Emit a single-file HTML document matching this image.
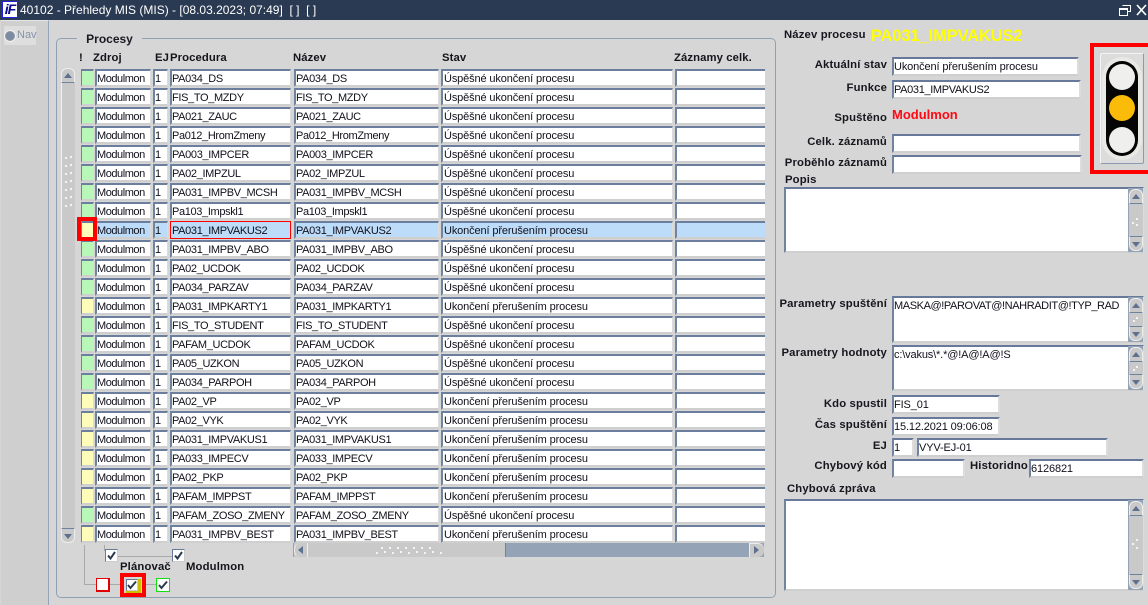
<!DOCTYPE html>
<html><head><meta charset="utf-8"><style>
*{box-sizing:border-box}
html,body{margin:0;padding:0;width:1148px;height:605px;overflow:hidden;background:#d6d6d6;font-family:"Liberation Sans",sans-serif;font-size:12px;color:#000}
div,span,b,i{position:absolute;font-style:normal}
#tb{left:0;top:0;width:1148px;height:20px;background:#2a3a52;color:#fff;font-size:12px;line-height:20px;white-space:pre}
#lg{left:2px;top:1px;width:16px;height:17px;background:#fff;border:1px solid #2222dd;color:#0a0a90;font:italic bold 14px/15px "Liberation Sans",sans-serif;text-align:center;letter-spacing:-1px}
#np{left:1px;top:20px;width:48px;height:585px;background:#cfcfcf;border-right:1px solid #94a3b6;border-top:1px solid #e6e6e6}
#nv{left:4px;top:26px;width:32px;height:19px;background:#dedede;color:#8593a8;font-size:11px;line-height:19px;padding-left:13px}
#rd{left:5px;top:31px;width:10px;height:10px;border-radius:50%;background:#7d8ba0;border:1px solid #8a96a8;box-shadow:0 0 0 1px #f2f2f2}
#gr{left:56px;top:38px;width:720px;height:560px;border:1px solid #8fa0b5;border-radius:5px}
#gl{left:77px;top:32px;width:65px;height:14px;background:#d6d6d6;font-weight:bold;font-size:12px;text-align:center;line-height:14px;color:#1a1a22}
.h{top:52px;font-weight:bold;font-size:11.3px;line-height:13px;color:#14141c;white-space:pre;letter-spacing:.1px}
.r{left:0;width:770px;height:18px}
.r i,.r b{top:0;height:18px;background:#fff;border:2px solid;border-color:#6b7e9e #dcdcdc #cfcfcf #71849f;border-width:2px 1px 2px 2px;font-weight:normal;font-size:11px;letter-spacing:-.35px;line-height:15px;padding:1px 0 0;white-space:pre;overflow:hidden;color:#10101a}
.r i{left:81px;width:13px;height:18px;background:#b9f7b9;border-left-width:1px}
.r i.y{background:#fdfdb9}
.r b:nth-child(2){left:95px;width:56px;letter-spacing:-.45px}
.r b:nth-child(3){left:153px;width:15px;letter-spacing:0}
.r b:nth-child(4){left:170px;width:121px}
.r b:nth-child(5){left:294px;width:145px}
.r b:nth-child(6){left:441px;width:232px;letter-spacing:-.13px;padding-left:1px}
.r b:nth-child(7){left:675px;width:90px;border-right:0}
.s b{background:#bddcfa}
.s b:nth-child(4){border:1px solid #ff0000;padding:1px 0 0 1px;line-height:16px;background:#bddcfa}
.f{background:#fff;border:2px solid;border-color:#66799a #dcdcdc #cfcfcf #71849f;border-width:2px;line-height:15px;padding:1px 0 0;font-size:11px;letter-spacing:-.13px;white-space:pre;overflow:hidden;height:19px;color:#10101a}
.l{font-weight:bold;font-size:11.3px;line-height:13px;right:261px;margin-top:1px;white-space:pre;color:#16161e;letter-spacing:.15px}
.l.a{right:auto}
.sb{width:15px;background:#94a3b6}
.sb>.bt,.sb>.bd,.sb>.tk{left:1px;width:14px}
.bt{background:#c9c9c9;border:1px solid #eee;border-radius:6px 6px 0 0;height:15px;top:1px;border-bottom-color:#6f83a0}
.bd{background:#c9c9c9;border:1px solid #eee;border-radius:0 0 6px 6px;height:15px;bottom:1px;border-top-color:#6f83a0}
.tk{background:#c9c9c9;top:16px;bottom:16px}
.up{left:4px;top:6px;width:0;height:0;border-left:4px solid transparent;border-right:4px solid transparent;border-bottom:5px solid #5d7090}
.dn{left:4px;bottom:5px;width:0;height:0;border-left:4px solid transparent;border-right:4px solid transparent;border-top:5px solid #5d7090}
.g{width:2px;height:2px;background:#f4f4f4}
.c{width:13px;height:13px;background:#fff;border:1px solid #ccc;border-top-color:#66799a;border-left-color:#66799a}
.ln{background:#a9a9a9}
.c svg{position:absolute;left:0;top:0}
</style></head><body>
<div id="tb"><span style="left:20px;top:0">40102 - Přehledy MIS (MIS) - [08.03.2023; 07:49]  [ ]  [ ]</span></div>
<div id="lg">iF</div>
<svg style="position:absolute;left:1118px;top:3px" width="30" height="14" fill="none" stroke="#fff"><path d="M4.5 2.5h8v6h-3M1.5 5.5h8v7h-8zM1.5 6.5h8" /><path d="M19 2l9 10M28 2l-9 10" stroke-width="1.6"/></svg>
<div id="np"></div><div id="nv">Nav</div><div id="rd"></div>
<div id="gr"></div><div id="gl">Procesy</div>

<div class="h" style="left:79px">!</div><div class="h" style="left:93px">Zdroj</div><div class="h" style="left:155px">EJ</div><div class="h" style="left:170px">Procedura</div><div class="h" style="left:293px">Název</div><div class="h" style="left:442px">Stav</div><div class="h" style="left:674px">Záznamy celk.</div>

<div class="sb" style="left:60px;top:67px;width:15px;height:477px;background:transparent">
<div class="bt"></div><div class="up"></div>
<div class="tk" style="border-left:1px solid #f2f2f2"></div>
<div class="bd"></div><div class="dn"></div>
<div class="g" style="left:5px;top:90px"></div><div class="g" style="left:10px;top:89px"></div><div class="g" style="left:5px;top:98px"></div><div class="g" style="left:10px;top:97px"></div><div class="g" style="left:5px;top:106px"></div><div class="g" style="left:10px;top:105px"></div><div class="g" style="left:5px;top:114px"></div><div class="g" style="left:10px;top:113px"></div><div class="g" style="left:5px;top:122px"></div><div class="g" style="left:10px;top:121px"></div><div class="g" style="left:5px;top:130px"></div><div class="g" style="left:10px;top:129px"></div><div class="g" style="left:5px;top:138px"></div><div class="g" style="left:10px;top:137px"></div>
</div>

<div class="r" style="top:69px"><i></i><b>Modulmon</b><b>1</b><b>PA034_DS</b><b>PA034_DS</b><b>Úspěšné ukončení procesu</b><b></b></div>
<div class="r" style="top:88px"><i></i><b>Modulmon</b><b>1</b><b>FIS_TO_MZDY</b><b>FIS_TO_MZDY</b><b>Úspěšné ukončení procesu</b><b></b></div>
<div class="r" style="top:107px"><i></i><b>Modulmon</b><b>1</b><b>PA021_ZAUC</b><b>PA021_ZAUC</b><b>Úspěšné ukončení procesu</b><b></b></div>
<div class="r" style="top:126px"><i></i><b>Modulmon</b><b>1</b><b>Pa012_HromZmeny</b><b>Pa012_HromZmeny</b><b>Úspěšné ukončení procesu</b><b></b></div>
<div class="r" style="top:145px"><i></i><b>Modulmon</b><b>1</b><b>PA003_IMPCER</b><b>PA003_IMPCER</b><b>Úspěšné ukončení procesu</b><b></b></div>
<div class="r" style="top:164px"><i></i><b>Modulmon</b><b>1</b><b>PA02_IMPZUL</b><b>PA02_IMPZUL</b><b>Úspěšné ukončení procesu</b><b></b></div>
<div class="r" style="top:183px"><i></i><b>Modulmon</b><b>1</b><b>PA031_IMPBV_MCSH</b><b>PA031_IMPBV_MCSH</b><b>Úspěšné ukončení procesu</b><b></b></div>
<div class="r" style="top:202px"><i></i><b>Modulmon</b><b>1</b><b>Pa103_Impskl1</b><b>Pa103_Impskl1</b><b>Úspěšné ukončení procesu</b><b></b></div>
<div class="r s" style="top:221px"><i class="y"></i><b>Modulmon</b><b>1</b><b>PA031_IMPVAKUS2</b><b>PA031_IMPVAKUS2</b><b>Ukončení přerušením procesu</b><b></b></div>
<div class="r" style="top:240px"><i></i><b>Modulmon</b><b>1</b><b>PA031_IMPBV_ABO</b><b>PA031_IMPBV_ABO</b><b>Úspěšné ukončení procesu</b><b></b></div>
<div class="r" style="top:259px"><i></i><b>Modulmon</b><b>1</b><b>PA02_UCDOK</b><b>PA02_UCDOK</b><b>Úspěšné ukončení procesu</b><b></b></div>
<div class="r" style="top:278px"><i></i><b>Modulmon</b><b>1</b><b>PA034_PARZAV</b><b>PA034_PARZAV</b><b>Úspěšné ukončení procesu</b><b></b></div>
<div class="r" style="top:297px"><i class="y"></i><b>Modulmon</b><b>1</b><b>PA031_IMPKARTY1</b><b>PA031_IMPKARTY1</b><b>Ukončení přerušením procesu</b><b></b></div>
<div class="r" style="top:316px"><i></i><b>Modulmon</b><b>1</b><b>FIS_TO_STUDENT</b><b>FIS_TO_STUDENT</b><b>Úspěšné ukončení procesu</b><b></b></div>
<div class="r" style="top:335px"><i></i><b>Modulmon</b><b>1</b><b>PAFAM_UCDOK</b><b>PAFAM_UCDOK</b><b>Úspěšné ukončení procesu</b><b></b></div>
<div class="r" style="top:354px"><i></i><b>Modulmon</b><b>1</b><b>PA05_UZKON</b><b>PA05_UZKON</b><b>Úspěšné ukončení procesu</b><b></b></div>
<div class="r" style="top:373px"><i></i><b>Modulmon</b><b>1</b><b>PA034_PARPOH</b><b>PA034_PARPOH</b><b>Úspěšné ukončení procesu</b><b></b></div>
<div class="r" style="top:392px"><i class="y"></i><b>Modulmon</b><b>1</b><b>PA02_VP</b><b>PA02_VP</b><b>Ukončení přerušením procesu</b><b></b></div>
<div class="r" style="top:411px"><i class="y"></i><b>Modulmon</b><b>1</b><b>PA02_VYK</b><b>PA02_VYK</b><b>Ukončení přerušením procesu</b><b></b></div>
<div class="r" style="top:430px"><i class="y"></i><b>Modulmon</b><b>1</b><b>PA031_IMPVAKUS1</b><b>PA031_IMPVAKUS1</b><b>Ukončení přerušením procesu</b><b></b></div>
<div class="r" style="top:449px"><i class="y"></i><b>Modulmon</b><b>1</b><b>PA033_IMPECV</b><b>PA033_IMPECV</b><b>Ukončení přerušením procesu</b><b></b></div>
<div class="r" style="top:468px"><i class="y"></i><b>Modulmon</b><b>1</b><b>PA02_PKP</b><b>PA02_PKP</b><b>Ukončení přerušením procesu</b><b></b></div>
<div class="r" style="top:487px"><i class="y"></i><b>Modulmon</b><b>1</b><b>PAFAM_IMPPST</b><b>PAFAM_IMPPST</b><b>Ukončení přerušením procesu</b><b></b></div>
<div class="r" style="top:506px"><i></i><b>Modulmon</b><b>1</b><b>PAFAM_ZOSO_ZMENY</b><b>PAFAM_ZOSO_ZMENY</b><b>Úspěšné ukončení procesu</b><b></b></div>
<div class="r" style="top:525px"><i class="y"></i><b>Modulmon</b><b>1</b><b>PA031_IMPBV_BEST</b><b>PA031_IMPBV_BEST</b><b>Ukončení přerušením procesu</b><b></b></div>

<div style="left:77px;top:217px;width:20px;height:24px;border:4px solid #f00"></div>

<div style="left:293px;top:543px;width:471px;height:14px;background:#94a3b6">
<div style="left:1px;top:0;width:212px;height:14px;background:#c9c9c9;border-right:1px solid #6f83a0"></div>
<div style="left:1px;top:0;width:14px;height:14px;background:#c9c9c9;border-left:1px solid #eee;border-right:1px solid #eee;border-radius:6px 0 0 6px"></div>
<div style="left:5px;top:3px;width:0;height:0;border-top:4px solid transparent;border-bottom:4px solid transparent;border-right:5px solid #5d7090"></div>
<div style="left:456px;top:0;width:15px;height:14px;background:#c9c9c9;border-left:1px solid #eee;border-top:1px solid #eee;border-radius:0 6px 6px 0"></div>
<div style="left:461px;top:3px;width:0;height:0;border-top:4px solid transparent;border-bottom:4px solid transparent;border-left:5px solid #5d7090"></div>
<svg style="position:absolute;left:81px;top:3px" width="70" height="9" fill="#f4f4f4"><path d="M7 1h2v2H7zM15 1h2v2h-2zM23 1h2v2h-2zM31 1h2v2h-2zM39 1h2v2h-2zM47 1h2v2h-2zM55 1h2v2h-2zM2 6h2v2H2zM10 5h2v2h-2zM18 6h2v2h-2zM26 5h2v2h-2zM34 6h2v2h-2zM42 5h2v2h-2zM50 6h2v2h-2zM58 5h2v2h-2zM66 6h2v2h-2z"/></svg>
</div>

<div class="ln" style="left:84px;top:545px;width:1px;height:40px"></div>
<div class="ln" style="left:85px;top:584px;width:40px;height:1px"></div>
<div class="ln" style="left:146px;top:584px;width:10px;height:1px"></div>
<div class="ln" style="left:104px;top:545px;width:1px;height:6px"></div>
<div class="ln" style="left:117px;top:556px;width:56px;height:1px"></div>
<div class="c" style="left:105px;top:549px"><svg width="11" height="11" fill="none" stroke="#2c3a50" stroke-width="2"><path d="M2 5.5l2.5 3L9 2"/></svg></div>
<div class="c" style="left:172px;top:549px"><svg width="11" height="11" fill="none" stroke="#2c3a50" stroke-width="2"><path d="M2 5.5l2.5 3L9 2"/></svg></div>
<div class="l a" style="left:120px;top:560px;color:#14141c">Plánovač</div>
<div class="l a" style="left:186px;top:560px;color:#14141c">Modulmon</div>
<div class="c" style="left:96px;top:578px;width:14px;height:14px;border:1px solid #e00000;box-shadow:inset -1px -1px 0 #e00000"></div>
<div style="left:120px;top:573px;width:26px;height:24px;border:4px solid #f00;background:#d6d6d6"></div>
<div style="left:126px;top:579px;width:15px;height:14px;background:#c8c000"></div>
<div class="c" style="left:126px;top:579px;width:12px;height:12px"><svg width="10" height="10" fill="none" stroke="#2c3a50" stroke-width="2"><path d="M1 5l2.5 3L9 1.5"/></svg></div>
<div class="c" style="left:156px;top:578px;width:14px;height:14px;border:1px solid #10e010"><svg width="12" height="12" fill="none" stroke="#2c3a50" stroke-width="2"><path d="M2 6l2.5 3L10 2.5"/></svg></div>

<div class="l a" style="left:784px;top:28px">Název procesu</div>
<div class="l a" style="left:871px;top:26px;font-size:16.3px;line-height:18px;color:#ffff00;letter-spacing:0">PA031_IMPVAKUS2</div>

<div class="l" style="top:58px">Aktuální stav</div>
<div class="f" style="left:892px;top:57px;width:187px">Ukončení přerušením procesu</div>
<div class="l" style="top:81px">Funkce</div>
<div class="f" style="left:892px;top:80px;width:189px;letter-spacing:-.35px">PA031_IMPVAKUS2</div>
<div class="l" style="top:111px">Spuštěno</div>
<div class="l a" style="left:892px;top:106px;font-size:13px;line-height:15px;color:#ff0a14;letter-spacing:0">Modulmon</div>
<div class="l" style="top:135px">Celk. záznamů</div>
<div class="f" style="left:892px;top:134px;width:189px">&nbsp;</div>
<div class="l" style="top:156px">Proběhlo záznamů</div>
<div class="f" style="left:892px;top:155px;width:190px">&nbsp;</div>
<div class="l a" style="left:785px;top:173px">Popis</div>
<div class="f" style="left:784px;top:187px;width:360px;height:66px"></div>
<div class="sb" style="left:1128px;top:188px;height:64px"><div class="bt"></div><div class="up"></div><div class="tk"></div><div class="bd"></div><div class="dn"></div><div class="g" style="left:8px;top:30px"></div><div class="g" style="left:4px;top:34px"></div><div class="g" style="left:8px;top:36px"></div></div>

<div class="l" style="top:297px">Parametry spuštění</div>
<div class="f" style="left:892px;top:296px;width:252px;height:47px;letter-spacing:-.4px">MASKA@!PAROVAT@!NAHRADIT@!TYP_RAD</div>
<div class="sb" style="left:1128px;top:297px;height:45px"><div class="bt"></div><div class="up"></div><div class="tk"></div><div class="bd"></div><div class="dn"></div><div class="g" style="left:8px;top:20px"></div><div class="g" style="left:5px;top:23px"></div></div>
<div class="l" style="top:346px">Parametry hodnoty</div>
<div class="f" style="left:892px;top:345px;width:252px;height:46px;letter-spacing:-.15px">c:\vakus\*.*@!A@!A@!S</div>
<div class="sb" style="left:1128px;top:346px;height:44px"><div class="bt"></div><div class="up"></div><div class="tk"></div><div class="bd"></div><div class="dn"></div><div class="g" style="left:8px;top:20px"></div><div class="g" style="left:5px;top:23px"></div></div>

<div class="l" style="top:397px">Kdo spustil</div>
<div class="f" style="left:892px;top:395px;width:108px">FIS_01</div>
<div class="l" style="top:418px">Čas spuštění</div>
<div class="f" style="left:892px;top:417px;width:108px">15.12.2021 09:06:08</div>
<div class="l" style="top:439px">EJ</div>
<div class="f" style="left:892px;top:438px;width:22px">1</div>
<div class="f" style="left:917px;top:438px;width:191px">VYV-EJ-01</div>
<div class="l" style="top:459px">Chybový kód</div>
<div class="f" style="left:892px;top:459px;width:73px">&nbsp;</div>
<div class="l a" style="left:970px;top:459px">Historidno</div>
<div class="f" style="left:1029px;top:459px;width:115px">6126821</div>
<div class="l a" style="left:787px;top:482px">Chybová zpráva</div>
<div class="f" style="left:784px;top:499px;width:360px;height:92px"></div>
<div class="sb" style="left:1128px;top:500px;height:90px"><div class="bt"></div><div class="up"></div><div class="tk"></div><div class="bd"></div><div class="dn"></div><div class="g" style="left:8px;top:39px"></div><div class="g" style="left:4px;top:43px"></div><div class="g" style="left:8px;top:47px"></div></div>

<div style="left:1090px;top:43px;width:58px;height:131px;border:4px solid #f00;border-right:0"></div>
<div style="left:1100px;top:53px;width:44px;height:111px;background:#dcdcdc;border:1px solid #8a9ab0;border-color:#f4f4f4 #8a9ab0 #8a9ab0 #f4f4f4;border-radius:2px"></div>
<svg style="position:absolute;left:1100px;top:53px" width="44" height="111"><rect x="2" y="4" width="40" height="103" rx="20" fill="#e9e9e6"/><rect x="6" y="8" width="32" height="95" rx="16" fill="#050505"/><circle cx="22" cy="24" r="13" fill="#eff0ee"/><circle cx="22" cy="55" r="13" fill="#fbbc09"/><circle cx="22" cy="87" r="13" fill="#eff0ee"/></svg>
</body></html>
